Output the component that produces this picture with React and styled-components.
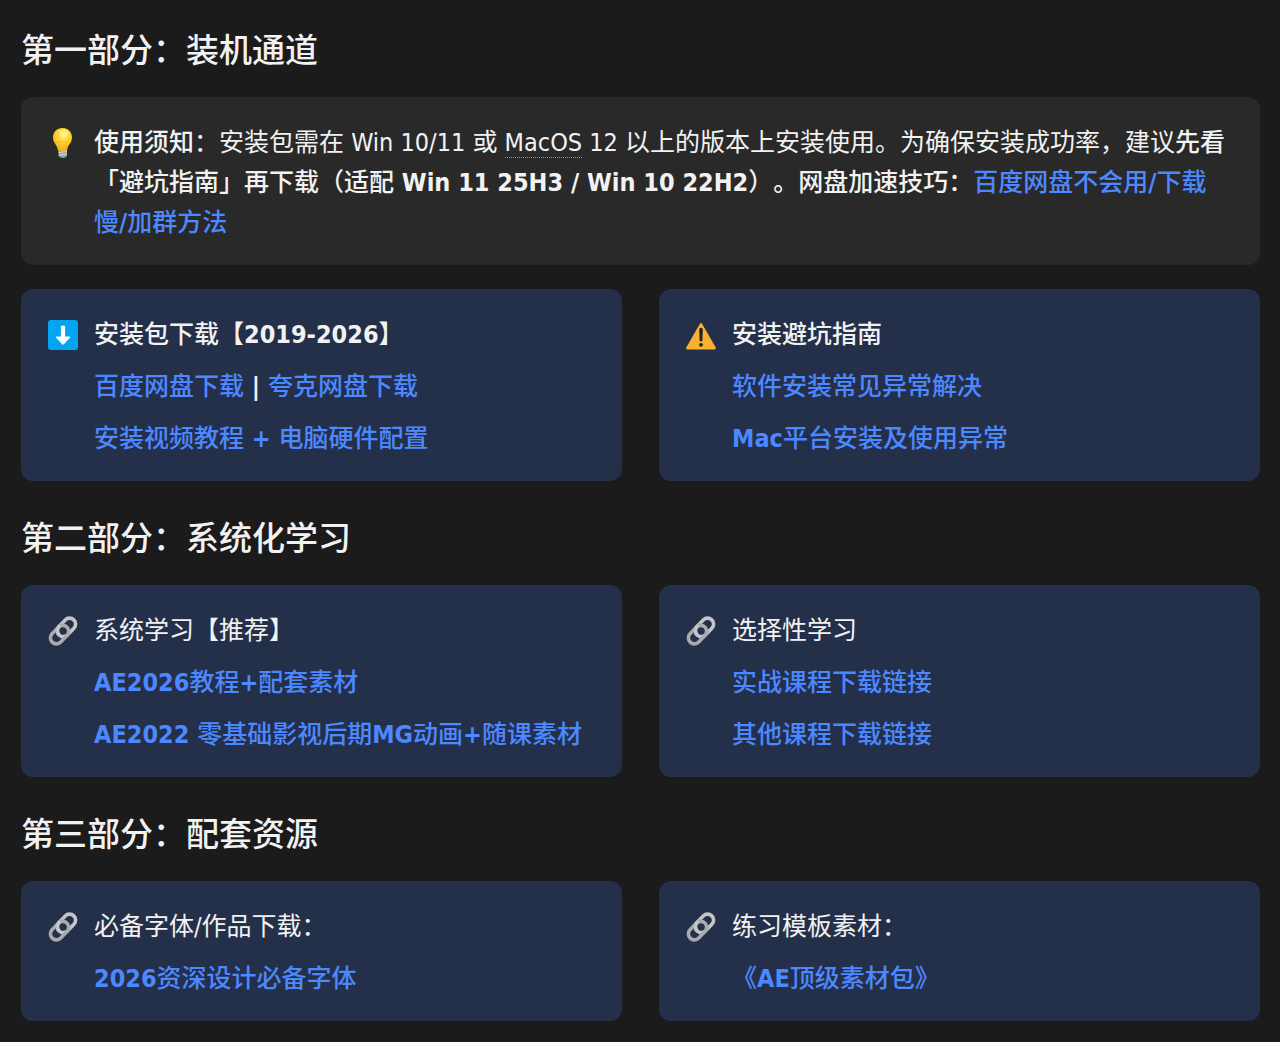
import React from "react";
import styled, { createGlobalStyle } from "styled-components";

const BulbIcon = () => (
  <Icon viewBox="0 0 30 30" aria-hidden="true">
    <defs>
      <radialGradient id="bulb" cx="0.55" cy="0.3" r="0.65">
        <stop offset="0" stopColor="#fff176" />
        <stop offset="0.45" stopColor="#fdd835" />
        <stop offset="1" stopColor="#f5b31b" />
      </radialGradient>
    </defs>
    <path d="M10.5 22h8.500v5.500q-.6 2-4.200 2.500q-3.600-.5-4.300-2.500z" fill="#90a4ae" />
    <path d="M10.500 24.500l8.500-.8M10.700 27l8-.8" stroke="#d5dee2" strokeWidth="1" />
    <path
      d="M14.500 0C8.800 0 5 4.200 5 9.300c0 5.700 4.200 7.600 4.900 12.700.2 1 .8 1.300 1.600 1.300h6c.8 0 1.400-.3 1.600-1.300C19.800 16.900 24 15 24 9.300 24 4.200 20.200 0 14.500 0z"
      fill="url(#bulb)"
    />
    <path d="M11.800 22l-1.300-9 2 .9 2-.9 2 .9 2-.9-1.300 9" fill="none" stroke="#f0a818" strokeWidth="0.5" />
    <ellipse cx="16" cy="5.500" rx="4.500" ry="3.800" fill="#fff59d" opacity="0.6" />
  </Icon>
);

const DownloadIcon = () => (
  <Icon viewBox="0 0 30 30" aria-hidden="true">
    <rect width="30" height="30" rx="3" fill="#03a5f2" />
    <path d="M12.900 6q2.100-.8 4.200 0v10.500h4.300q1.200.2.500 1.300l-6 6.500q-.9.800-1.800 0l-6-6.500q-.7-1.100.5-1.300h4.300z" fill="#fff" />
  </Icon>
);

const WarningIcon = () => (
  <Icon viewBox="0 0 30 30" aria-hidden="true">
    <path d="M13.900 3.800q1.100-1.600 2.200 0l13.600 23.800q.7 1.700-1 1.900H1.300q-1.700-.2-1-1.900z" fill="#fbb030" />
    <path d="M13.300 9.500a1.700 1.700 0 0 1 3.400 0l-.3 11.300q-1.400 1.200-2.800 0z" fill="#1c2024" />
    <circle cx="15" cy="24.800" r="1.900" fill="#1c2024" />
  </Icon>
);

const ChainIcon = () => (
  <Icon viewBox="0 0 30 30" aria-hidden="true">
    <g transform="rotate(-46 15 15)" fill="none" strokeWidth="3.600">
      <rect x="9.500" y="9" width="21" height="12" rx="6" stroke="#c4c5c8" />
      <rect x="-0.500" y="9" width="21" height="12" rx="6" stroke="#a9aaad" />
      <path d="M17 9h-1.500a6 6 0 0 0-6 6" stroke="#c4c5c8" />
    </g>
  </Icon>
);

const App = () => {
  return (
    <Page lang="zh-CN">
      <GlobalStyle />

      <SectionTitle>第一部分：装机通道</SectionTitle>
      <Notice>
        <BulbIcon />
        <NoticeText>
          <Strong>使用须知</Strong>：安装包需在 Win 10/11 或 <Term>MacOS</Term> 12
          以上的版本上安装使用。为确保安装成功率，建议
          <Strong>
            先看「避坑指南」再下载（适配<Latin> Win 11 25H3 / Win 10 22H2</Latin>）。网盘加速技巧：
            <DocLink href="#pan">
              百度网盘不会用<Latin>/</Latin>下载慢<Latin>/</Latin>加群方法
            </DocLink>
          </Strong>
        </NoticeText>
      </Notice>
      <CardGrid>
        <Card>
          <DownloadIcon />
          <CardBody>
            <CardTitle $bold>
              安装包下载【<Latin>2019-2026</Latin>】
            </CardTitle>
            <Line>
              <DocLink href="#baidu">百度网盘下载</DocLink>
              <Latin> | </Latin>
              <DocLink href="#quark">夸克网盘下载</DocLink>
            </Line>
            <Line>
              <DocLink href="#video">
                安装视频教程<Latin> + </Latin>电脑硬件配置
              </DocLink>
            </Line>
          </CardBody>
        </Card>
        <Card>
          <WarningIcon />
          <CardBody>
            <CardTitle $bold>安装避坑指南</CardTitle>
            <Line>
              <DocLink href="#issues">软件安装常见异常解决</DocLink>
            </Line>
            <Line>
              <DocLink href="#mac">
                <Latin>Mac</Latin>平台安装及使用异常
              </DocLink>
            </Line>
          </CardBody>
        </Card>
      </CardGrid>

      <SectionTitle>第二部分：系统化学习</SectionTitle>
      <CardGrid>
        <Card>
          <ChainIcon />
          <CardBody>
            <CardTitle>系统学习【推荐】</CardTitle>
            <Line>
              <DocLink href="#ae2026">
                <Latin>AE2026</Latin>教程<Latin>+</Latin>配套素材
              </DocLink>
            </Line>
            <Line>
              <DocLink href="#ae2022">
                <Latin>AE2022 </Latin>零基础影视后期<Latin>MG</Latin>动画<Latin>+</Latin>随课素材
              </DocLink>
            </Line>
          </CardBody>
        </Card>
        <Card>
          <ChainIcon />
          <CardBody>
            <CardTitle>选择性学习</CardTitle>
            <Line>
              <DocLink href="#practice">实战课程下载链接</DocLink>
            </Line>
            <Line>
              <DocLink href="#others">其他课程下载链接</DocLink>
            </Line>
          </CardBody>
        </Card>
      </CardGrid>

      <SectionTitle>第三部分：配套资源</SectionTitle>
      <CardGrid>
        <Card>
          <ChainIcon />
          <CardBody>
            <CardTitle>必备字体/作品下载：</CardTitle>
            <Line>
              <DocLink href="#fonts">
                <Latin>2026</Latin>资深设计必备字体
              </DocLink>
            </Line>
          </CardBody>
        </Card>
        <Card>
          <ChainIcon />
          <CardBody>
            <CardTitle>练习模板素材：</CardTitle>
            <Line>
              <DocLink href="#assets">
                《<Latin>AE</Latin>顶级素材包》
              </DocLink>
            </Line>
          </CardBody>
        </Card>
      </CardGrid>
    </Page>
  );
};

const GlobalStyle = createGlobalStyle`
  body {
    margin: 0;
    background: #1b1b1b;
  }
`;

const Page = styled.main`
  box-sizing: border-box;
  padding: 26px 20px 21px 21px;
  color: #f2f2f2;
  font-family: "DejaVu Sans Condensed", "Noto Sans CJK SC", sans-serif;
  font-size: 25px;
  line-height: 40px;
  text-spacing-trim: space-all;
`;

const SectionTitle = styled.h2`
  margin: 0 0 22px;
  font-size: 33px;
  font-weight: 500;
  line-height: 49px;
`;

const Panel = styled.section`
  display: flex;
  align-items: flex-start;
  gap: 16px;
  padding: 26px 24px 22px 27px;
  border-radius: 12px;
`;

const Notice = styled(Panel)`
  margin-bottom: 24px;
  padding-right: 32px;
  background: #292929;
`;

const Card = styled(Panel)`
  background: #24304a;
`;

const CardGrid = styled.div`
  display: grid;
  grid-template-columns: 1fr 1fr;
  gap: 37px;

  & + ${SectionTitle} {
    margin-top: 33px;
  }
`;

const Icon = styled.svg`
  flex: none;
  width: 30px;
  height: 30px;
  margin-top: 5px;
  overflow: visible;
`;

const NoticeText = styled.p`
  flex: 1;
  margin: 0;
`;

const CardBody = styled.div`
  display: flex;
  flex: 1;
  flex-direction: column;
  gap: 12px;
`;

const CardTitle = styled.h3`
  margin: 0;
  font-size: 25px;
  font-weight: ${({ $bold }) => ($bold ? 500 : 400)};
`;

const Line = styled.p`
  margin: 0;
  font-weight: 500;
`;

const Strong = styled.strong`
  font-weight: 500;
`;

const Latin = styled.b`
  font-weight: 700;
`;

const Term = styled.span`
  border-bottom: 1px dotted #9a9a9a;
`;

const DocLink = styled.a`
  color: #4c88ff;
  text-decoration: none;
`;

export default App;
